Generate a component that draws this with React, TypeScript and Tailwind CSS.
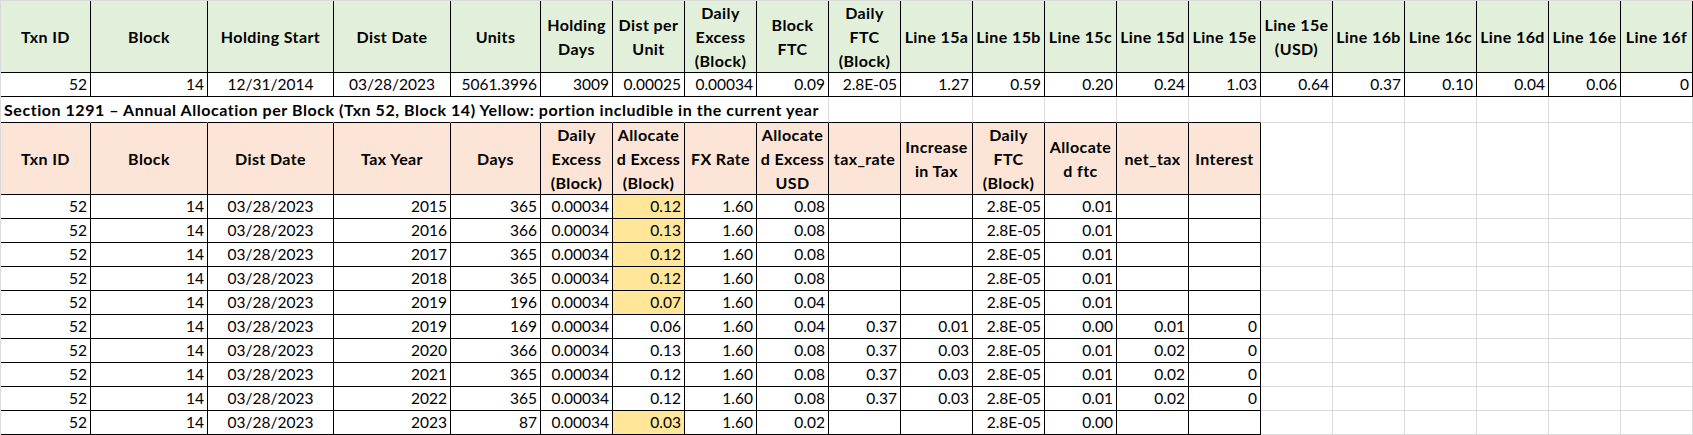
import React from 'react';

// column widths (each includes its 1px right border)
const W = [
  'w-[90px]', 'w-[117px]', 'w-[126px]', 'w-[117px]', 'w-[90px]',
  'w-[72px]', 'w-[72px]', 'w-[72px]', 'w-[72px]', 'w-[72px]', 'w-[72px]',
  'w-[72px]', 'w-[72px]', 'w-[72px]', 'w-[72px]', 'w-[72px]', 'w-[72px]',
  'w-[72px]', 'w-[72px]', 'w-[72px]', 'w-[72px]',
];

const GRID = 'border-[#dadada]';

const topHead: string[][] = [
  ['Txn ID'], ['Block'], ['Holding Start'], ['Dist Date'], ['Units'],
  ['Holding', 'Days'], ['Dist per', 'Unit'], ['Daily', 'Excess', '(Block)'],
  ['Block', 'FTC'], ['Daily', 'FTC', '(Block)'],
  ['Line 15a'], ['Line 15b'], ['Line 15c'], ['Line 15d'], ['Line 15e'],
  ['Line 15e', '(USD)'], ['Line 16b'], ['Line 16c'], ['Line 16d'], ['Line 16e'], ['Line 16f'],
];

const topRow = [
  '52', '14', '12/31/2014', '03/28/2023', '5061.3996', '3009', '0.00025', '0.00034',
  '0.09', '2.8E-05', '1.27', '0.59', '0.20', '0.24', '1.03', '0.64', '0.37', '0.10',
  '0.04', '0.06', '0',
];

const allocHead: string[][] = [
  ['Txn ID'], ['Block'], ['Dist Date'], ['Tax Year'], ['Days'],
  ['Daily', 'Excess', '(Block)'], ['Allocate', 'd Excess', '(Block)'], ['FX Rate'],
  ['Allocate', 'd Excess', 'USD'], ['tax_rate'], ['Increase', 'in Tax'],
  ['Daily', 'FTC', '(Block)'], ['Allocate', 'd ftc'], ['net_tax'], ['Interest'],
];

interface AllocRow {
  year: string;
  days: string;
  excess: string;
  yellow: boolean;
  usd: string;
  rate: string;
  increase: string;
  ftc: string;
  net: string;
  interest: string;
}

const allocRows: AllocRow[] = [
  { year: '2015', days: '365', excess: '0.12', yellow: true, usd: '0.08', rate: '', increase: '', ftc: '0.01', net: '', interest: '' },
  { year: '2016', days: '366', excess: '0.13', yellow: true, usd: '0.08', rate: '', increase: '', ftc: '0.01', net: '', interest: '' },
  { year: '2017', days: '365', excess: '0.12', yellow: true, usd: '0.08', rate: '', increase: '', ftc: '0.01', net: '', interest: '' },
  { year: '2018', days: '365', excess: '0.12', yellow: true, usd: '0.08', rate: '', increase: '', ftc: '0.01', net: '', interest: '' },
  { year: '2019', days: '196', excess: '0.07', yellow: true, usd: '0.04', rate: '', increase: '', ftc: '0.01', net: '', interest: '' },
  { year: '2019', days: '169', excess: '0.06', yellow: false, usd: '0.04', rate: '0.37', increase: '0.01', ftc: '0.00', net: '0.01', interest: '0' },
  { year: '2020', days: '366', excess: '0.13', yellow: false, usd: '0.08', rate: '0.37', increase: '0.03', ftc: '0.01', net: '0.02', interest: '0' },
  { year: '2021', days: '365', excess: '0.12', yellow: false, usd: '0.08', rate: '0.37', increase: '0.03', ftc: '0.01', net: '0.02', interest: '0' },
  { year: '2022', days: '365', excess: '0.12', yellow: false, usd: '0.08', rate: '0.37', increase: '0.03', ftc: '0.01', net: '0.02', interest: '0' },
  { year: '2023', days: '87', excess: '0.03', yellow: true, usd: '0.02', rate: '', increase: '', ftc: '0.00', net: '', interest: '' },
];

function HeadCell({ i, lines, bg }: { i: number; lines: string[]; bg: string }) {
  return (
    <div
      className={`${W[i]} ${bg} shrink-0 h-full border-r border-b border-black flex flex-col items-center justify-center font-bold text-[16px] tracking-[0.4px] leading-[24px] text-center whitespace-nowrap`}
    >
      {lines.map((l) => (
        <span key={l}>{l}</span>
      ))}
    </div>
  );
}

function Cell({
  i,
  children,
  center = false,
  extra = '',
}: {
  i: number;
  children?: React.ReactNode;
  center?: boolean;
  extra?: string;
}) {
  return (
    <div
      className={`${W[i]} shrink-0 h-full border-r border-b border-black px-[3px] leading-[23px] whitespace-nowrap ${
        center ? 'text-center' : 'text-right'
      } ${extra}`}
    >
      {children}
    </div>
  );
}

function GridCell({ i }: { i: number }) {
  return <div className={`${W[i]} shrink-0 h-full border-r border-b ${GRID}`} />;
}

export default function App() {
  const empties = [15, 16, 17, 18, 19, 20];

  return (
    <div className={`w-[1693px] h-[435px] overflow-hidden bg-white border-l border-t ${GRID} text-black text-[15.5px] font-['Lato',sans-serif]`}>
      {/* distribution summary header */}
      <div className="flex h-[72px]">
        {topHead.map((lines, i) => (
          <HeadCell key={i} i={i} lines={lines} bg="bg-[#e2efda]" />
        ))}
      </div>
      <div className="flex h-[24px]">
        {topRow.map((v, i) => (
          <Cell key={i} i={i} center={i === 2 || i === 3}>
            {v}
          </Cell>
        ))}
      </div>

      {/* section title, overflows across cells like a sheet */}
      <div className="flex h-[26px]">
        {W.map((_, i) => (
          <div
            key={i}
            className={`${W[i]} shrink-0 h-full border-r border-b ${
              i < 8 ? 'border-r-transparent' : 'border-r-[#dadada]'
            } ${i < 15 ? 'border-b-black' : 'border-b-[#dadada]'}`}
          >
            {i === 0 && (
              <div className="pl-[3px] pt-[1px] leading-[24px] font-bold text-[16px] tracking-[0.55px] whitespace-nowrap">
                Section 1291 – Annual Allocation per Block (Txn 52, Block 14) Yellow: portion includible in the current year
              </div>
            )}
          </div>
        ))}
      </div>

      {/* annual allocation table */}
      <div className="flex h-[72px]">
        {allocHead.map((lines, i) => (
          <HeadCell key={i} i={i} lines={lines} bg="bg-[#fce4d6]" />
        ))}
        {empties.map((i) => (
          <GridCell key={i} i={i} />
        ))}
      </div>
      {allocRows.map((r, n) => (
        <div key={n} className="flex h-[24px]">
          <Cell i={0}>52</Cell>
          <Cell i={1}>14</Cell>
          <Cell i={2} center>
            03/28/2023
          </Cell>
          <Cell i={3}>{r.year}</Cell>
          <Cell i={4}>{r.days}</Cell>
          <Cell i={5}>0.00034</Cell>
          <Cell i={6} extra={r.yellow ? 'bg-[#ffe699]' : ''}>
            {r.excess}
          </Cell>
          <Cell i={7}>1.60</Cell>
          <Cell i={8}>{r.usd}</Cell>
          <Cell i={9}>{r.rate}</Cell>
          <Cell i={10}>{r.increase}</Cell>
          <Cell i={11}>2.8E-05</Cell>
          <Cell i={12}>{r.ftc}</Cell>
          <Cell i={13}>{r.net}</Cell>
          <Cell i={14}>{r.interest}</Cell>
          {empties.map((i) => (
            <GridCell key={i} i={i} />
          ))}
        </div>
      ))}
    </div>
  );
}
